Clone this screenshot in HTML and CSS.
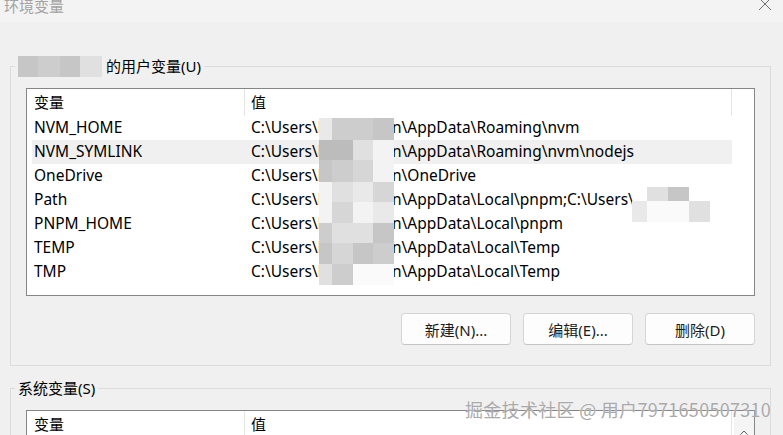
FILE: index.html
```html
<!DOCTYPE html>
<html lang="zh-CN">
<head>
    <meta charset="UTF-8">
    <title>环境变量</title>
    <link rel="stylesheet" href="styles.css">
</head>
<body>
    <div class="titlebar">
        <span class="title">环境变量</span>
        <svg class="close" viewBox="0 0 14 14"><path d="M1 1L13 13M13 1L1 13"/></svg>
    </div>

    <fieldset class="group user-group">
        <legend>
            <span class="blur name-blur">
                <i class="p2"></i><i class="p3"></i><i class="p2"></i><i class="p5"></i>
            </span>的用户变量(U)
        </legend>
        <div class="listbox">
            <div class="lv-head">
                <div class="name">变量</div>
                <div class="value">值</div>
            </div>
            <div class="lv-row">
                <div class="name">NVM_HOME</div>
                <div class="value"><span class="pre">C:\Users\l</span><span>n\AppData\Roaming\nvm</span></div>
            </div>
            <div class="lv-row hot">
                <div class="name">NVM_SYMLINK</div>
                <div class="value"><span class="pre">C:\Users\l</span><span>n\AppData\Roaming\nvm\nodejs</span></div>
            </div>
            <div class="lv-row">
                <div class="name">OneDrive</div>
                <div class="value"><span class="pre">C:\Users\l</span><span>n\OneDrive</span></div>
            </div>
            <div class="lv-row">
                <div class="name">Path</div>
                <div class="value"><span class="pre">C:\Users\l</span><span>n\AppData\Local\pnpm;C:\Users\</span></div>
            </div>
            <div class="lv-row">
                <div class="name">PNPM_HOME</div>
                <div class="value"><span class="pre">C:\Users\l</span><span>n\AppData\Local\pnpm</span></div>
            </div>
            <div class="lv-row">
                <div class="name">TEMP</div>
                <div class="value"><span class="pre">C:\Users\l</span><span>n\AppData\Local\Temp</span></div>
            </div>
            <div class="lv-row">
                <div class="name">TMP</div>
                <div class="value"><span class="pre">C:\Users\l</span><span>n\AppData\Local\Temp</span></div>
            </div>

            <!-- 用户名打码 -->
            <div class="blur user-blur">
                <i class="p6"></i><i class="p3"></i><i class="p3"></i><i class="p2"></i>
                <i class="p1"></i><i class="p1"></i><i class="p5"></i><i class="p7"></i>
                <i class="p2"></i><i class="p3"></i><i class="p4"></i><i class="p7"></i>
                <i class="p7"></i><i class="p5"></i><i class="p6"></i><i class="p4"></i>
                <i class="p7"></i><i class="p4"></i><i class="p7"></i><i class="p6"></i>
                <i class="p3"></i><i class="p5"></i><i class="p5"></i><i class="p2"></i>
                <i class="p2"></i><i class="p4"></i><i class="p2"></i><i class="p3"></i>
                <i class="p5"></i><i class="p3"></i><i class="p8"></i><i class="p8"></i>
            </div>
            <div class="blur path-blur">
                <i></i><i class="p5"></i><i class="p2"></i><i></i>
                <i class="p6"></i><i class="p8"></i><i class="p8"></i><i class="p5"></i>
            </div>
        </div>
        <div class="actions">
            <button>新建(N)...</button>
            <button>编辑(E)...</button>
            <button>删除(D)</button>
        </div>
    </fieldset>

    <fieldset class="group sys-group">
        <legend>系统变量(S)</legend>
        <div class="listbox sys">
            <div class="lv-main">
                <div class="lv-head">
                    <div class="name">变量</div>
                    <div class="value">值</div>
                </div>
            </div>
            <div class="vscroll">
                <svg viewBox="0 0 8 5"><path d="M0.5 4.5L4 1L7.5 4.5"/></svg>
            </div>
        </div>
    </fieldset>

    <div class="watermark">掘金技术社区 @ 用户7971650507310</div>
</body>
</html>
```

FILE: styles.css
```css
* {
    box-sizing: border-box;
}
body {
    margin: 0;
    width: 783px;
    height: 435px;
    overflow: hidden;
    position: relative;
    background: #f0f0f0;
    font-family: "Noto Sans", "Noto Sans CJK SC", sans-serif;
    font-size: 15.5px;
    color: #000;
}
.titlebar {
    height: 22px;
    background: #f3f3f3;
    display: flex;
    justify-content: space-between;
    align-items: flex-start;
    padding: 0 11px 0 4px;
    overflow: hidden;
}
.title {
    font-size: 15px;
    line-height: 15px;
    margin-top: -1px;
    color: #a3a3a3;
}
.close {
    width: 14px;
    height: 14px;
    margin-top: -3px;
}
.close path {
    stroke: #707070;
    stroke-width: 1;
    fill: none;
}

/* 分组框 */
.group {
    margin: 33px 12px 0 10px;
    padding: 11px 15px 20px;
    border: 1px solid #dcdcdc;
    min-inline-size: 0;
}
.sys-group {
    margin-top: 11px;
}
.group legend {
    padding: 0 3px;
    margin-left: -11px;
    height: 22px;
    line-height: 22px;
    font-size: 15px;
}

/* 打码色块 */
.blur {
    display: inline-grid;
}
.blur i {
    display: block;
}
.name-blur {
    grid-template-columns: 20px 22px 20px 22px;
    grid-template-rows: 21px;
    vertical-align: top;
    margin: 1px 4px 0 0;
}
.user-blur {
    position: absolute;
    left: 292px;
    top: 29px;
    grid-template-columns: 13px 21px 20px 21px;
    grid-template-rows: 22px 20px 22px 20px 21px 20px 21px 21px;
}
.path-blur {
    position: absolute;
    left: 605px;
    top: 98px;
    grid-template-columns: 15px 21px 21px 21px;
    grid-template-rows: 14px 21px;
}
.p1 { background: #bcbcbc; }
.p2 { background: #c6c6c6; }
.p3 { background: #cdcdcd; }
.p4 { background: #d6d6d6; }
.p5 { background: #e0e0e0; }
.p6 { background: #e9e9e9; }
.p7 { background: #f3f3f3; }
.p8 { background: #fafafa; }

/* 列表 */
.listbox {
    position: relative;
    height: 208px;
    padding-left: 5px;
    background: #fff;
    border: 1px solid #868686;
}
.lv-head,
.lv-row {
    display: flex;
    width: 700px;
    white-space: nowrap;
}
.lv-head {
    height: 27px;
}
.lv-head > div {
    padding-top: 1px;
    line-height: 24px;
    font-size: 15px;
    border-right: 1px solid #e5e5e5;
}
.lv-row {
    height: 24px;
    line-height: 23px;
}
.lv-row.hot {
    background: #f0f0f0;
}
.name {
    width: 213px;
    padding-left: 2px;
}
.value {
    width: 487px;
    padding-left: 6px;
    display: flex;
    overflow: hidden;
}
.value .pre {
    width: 141px;
    overflow: hidden;
    flex-shrink: 0;
}

.actions {
    display: flex;
    justify-content: flex-end;
    gap: 12px;
    margin-top: 17px;
}
.actions button {
    width: 110px;
    height: 32px;
    padding: 0;
    font-family: inherit;
    font-size: 15px;
    color: #1b1b1b;
    background: #fdfdfd;
    border: 1px solid #d5d5d5;
    border-bottom-color: #c4c4c4;
    border-radius: 4px;
}

.listbox.sys {
    display: flex;
    height: 80px;
}
.lv-main {
    flex: 1;
}
.vscroll {
    width: 20px;
    background: #f5f5f5;
    display: flex;
    justify-content: center;
    padding-top: 19px;
}
.vscroll svg {
    width: 8px;
    height: 5px;
}
.vscroll path {
    stroke: #606060;
    fill: none;
}

.watermark {
    position: absolute;
    left: 465px;
    top: 399px;
    font-family: "Noto Sans CJK SC", sans-serif;
    font-size: 18px;
    line-height: 20px;
    letter-spacing: 0.3px;
    color: #a9a9a9;
    text-shadow: 0 0 1px rgba(255, 255, 255, 0.9);
    white-space: nowrap;
}
```
